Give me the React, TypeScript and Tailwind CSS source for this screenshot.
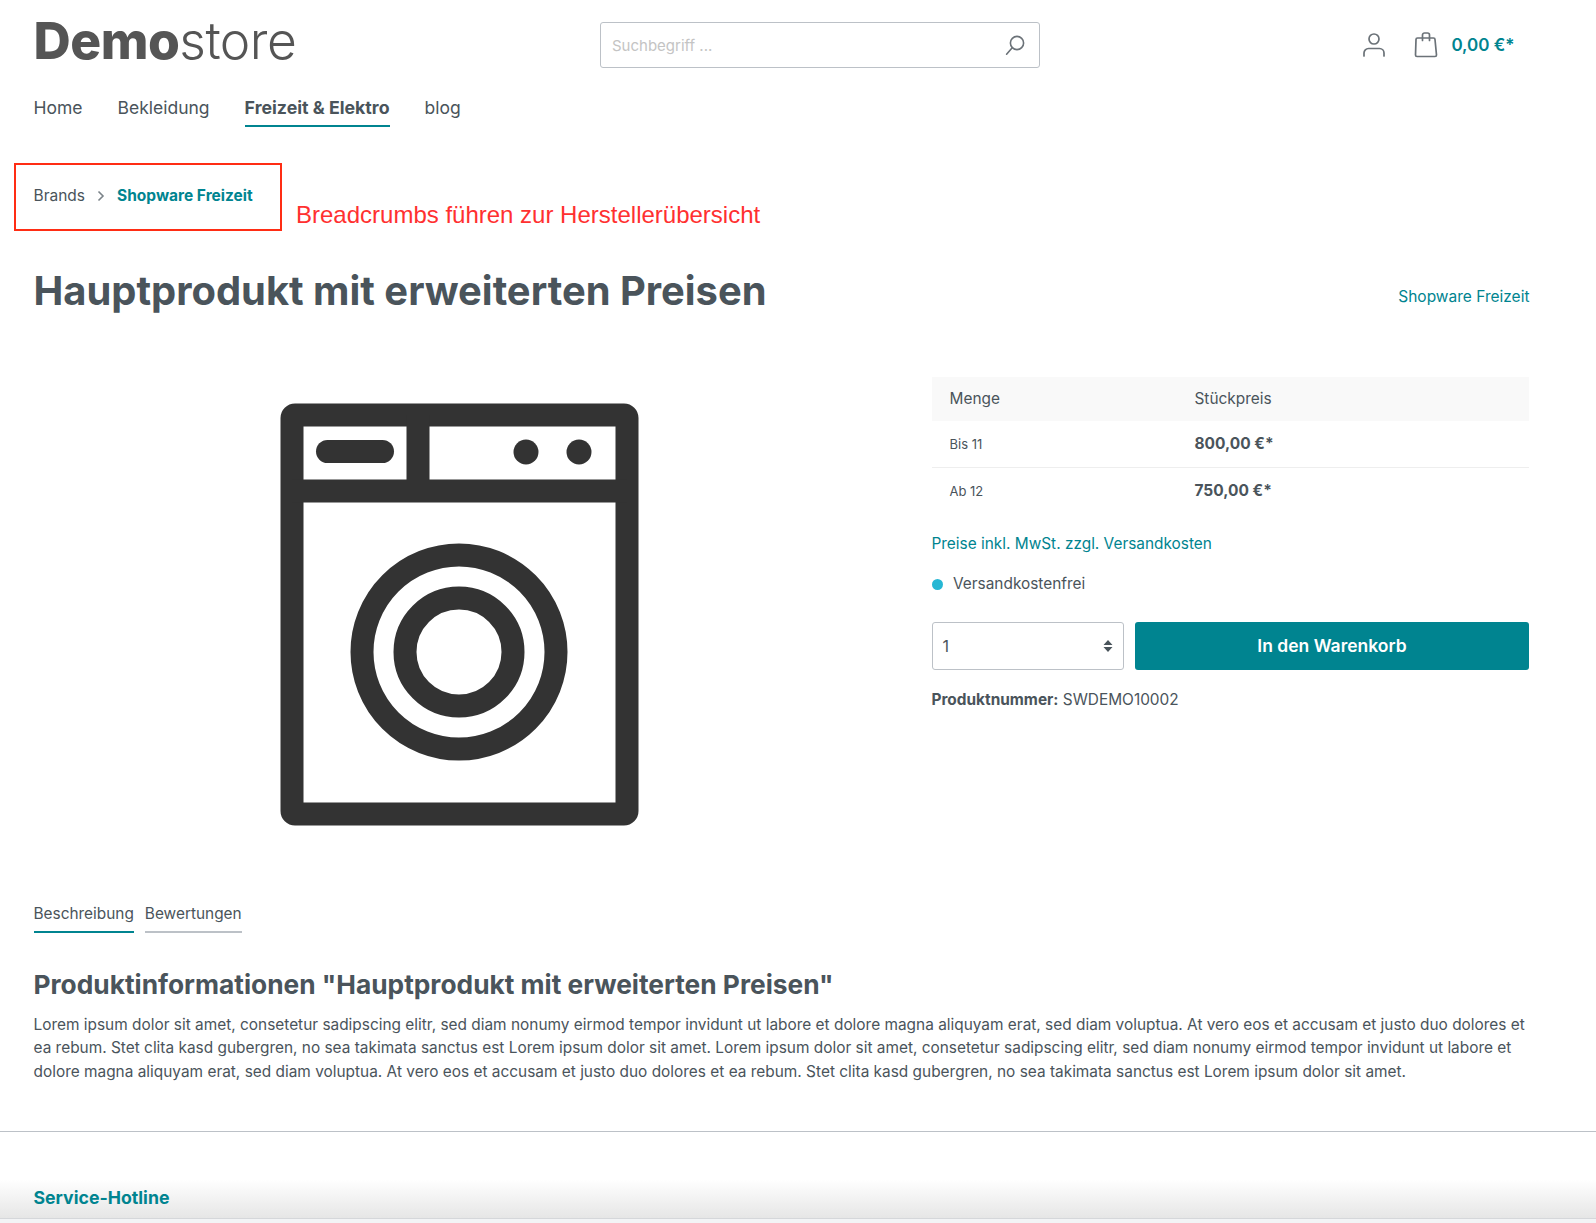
const navItems = ['Home', 'Bekleidung', 'Freizeit & Elektro', 'blog'];

function SearchIcon() {
  return (
    <svg width="24" height="24" viewBox="0 0 24 24" fill="none" stroke="#6b7278" strokeWidth="1.6">
      <circle cx="14" cy="10" r="6.6" />
      <path d="M9.2 14.8 3.6 21.2" strokeLinecap="round" />
    </svg>
  );
}

function UserIcon() {
  return (
    <svg width="24" height="26" viewBox="0 0 24 26" fill="none" stroke="#6b7278" strokeWidth="1.7">
      <circle cx="12" cy="7" r="5" />
      <path d="M2 24v-3a4.500 4.500 0 0 1 4.500-4.500h11A4.500 4.500 0 0 1 22 21v3" strokeLinecap="round" />
    </svg>
  );
}

function BagIcon() {
  return (
    <svg width="24" height="26" viewBox="0 0 24 26" fill="none" stroke="#6b7278" strokeWidth="1.7">
      <path d="M3.500 6H8.500M15.500 6h4A1.500 1.500 0 0 1 21 7.500L22.500 23a1.500 1.500 0 0 1-1.500 1.500H3A1.500 1.500 0 0 1 1.500 23L2 7.500A1.500 1.500 0 0 1 3.500 6Z" strokeLinejoin="round" />
      <path d="M8.500 8.500V3a2 2 0 0 1 2-2h3a2 2 0 0 1 2 2v5.500" strokeLinecap="round" />
    </svg>
  );
}

function WasherIcon() {
  return (
    <svg width="359" height="423" viewBox="0 0 359 423" className="block">
      <rect x="12" y="12" width="335" height="399" rx="3" fill="#fff" stroke="#333333" strokeWidth="23" strokeLinejoin="round" />
      <path d="M12 88H347M138 12V88" stroke="#333333" strokeWidth="23" fill="none" />
      <rect x="36" y="37" width="78" height="23" rx="11.500" fill="#333333" />
      <circle cx="246" cy="49" r="12.500" fill="#333333" />
      <circle cx="299" cy="49" r="12.500" fill="#333333" />
      <circle cx="179" cy="249" r="97" fill="none" stroke="#333333" strokeWidth="23" />
      <circle cx="179" cy="249" r="54" fill="none" stroke="#333333" strokeWidth="23" />
    </svg>
  );
}

export default function App() {
  return (
    <div className="relative overflow-hidden bg-white font-['Inter',sans-serif] text-[#4a545b]">
      {/* red annotation from the screenshot */}
      <div className="absolute left-[14px] top-[163px] h-[68px] w-[268px] border-2 border-[#ff2d14]" />
      <div className="absolute left-[296px] top-[200px] font-['Liberation_Sans',sans-serif] text-[24px] leading-[30px] text-[#ff3030]">
        Breadcrumbs führen zur Herstellerübersicht
      </div>

      <div className="pl-[33.500px] pr-[66.500px]">
        <header className="flex h-[91px] items-start">
          <div className="mt-[10px] w-[566.500px] text-[51.500px] leading-[60px] tracking-[-0.5px] text-[#555555]">
            <span className="font-extrabold">Demo</span>
            <span className="font-light">store</span>
          </div>
          <div className="mt-[22px] flex h-[46px] w-[440px] items-center justify-between rounded-[3px] border border-[#bcc1c7] pl-[11px] pr-[12px]">
            <span className="pt-[2px] text-[15px] text-[#c4c4c4]">Suchbegriff ...</span>
            <SearchIcon />
          </div>
          <div className="ml-auto mr-[15px] mt-[32px] flex items-center">
            <UserIcon />
            <span className="ml-[28px]"><BagIcon /></span>
            <span className="ml-[13px] pt-[1px] text-[17px] font-semibold text-[#008490]">0,00 €*</span>
          </div>
        </header>

        <nav className="flex h-[37px] gap-[35px]">
          {navItems.map((item) => (
            <div
              key={item}
              className={
                item === 'Freizeit & Elektro'
                  ? 'h-[36px] border-b-2 border-[#008490] pt-[4px] text-[17.750px] font-bold'
                  : 'h-[36px] pt-[4px] text-[17.500px]'
              }
            >
              {item}
            </div>
          ))}
        </nav>

        <div className="mt-[56px] flex h-[24px] items-center text-[15.500px]">
          <span>Brands</span>
          <svg width="10" height="12" viewBox="0 0 10 12" fill="none" stroke="#7b8389" strokeWidth="1.600" className="mx-[11px]">
            <path d="M2.500 1.500 7 6l-4.500 4.500" />
          </svg>
          <span className="font-bold text-[#008490]">Shopware Freizeit</span>
        </div>

        <div className="mt-[55px] flex h-[56px] items-center justify-between">
          <h1 className="text-[39.900px] font-bold leading-[56px]">Hauptprodukt mit erweiterten Preisen</h1>
          <a className="mt-[11px] text-[15.500px] text-[#008490]">Shopware Freizeit</a>
        </div>

        <div className="mt-[58px] flex h-[522px]">
          <div className="w-[898px] shrink-0 pl-[246px] pt-[26px]">
            <WasherIcon />
          </div>
          <div className="w-[597.500px]">
            <div className="flex h-[44px] items-center bg-[#f9f9f9] text-[15.400px]">
              <div className="w-[263px] pl-[18px]">Menge</div>
              <div>Stückpreis</div>
            </div>
            <div className="flex h-[47px] items-center border-b border-[#eeeeee]">
              <div className="w-[263px] pl-[18px] pt-[1px] text-[13px]">Bis 11</div>
              <div className="text-[15.500px] font-bold">800,00 €*</div>
            </div>
            <div className="flex h-[46px] items-center">
              <div className="w-[263px] pl-[18px] pt-[1px] text-[13px]">Ab 12</div>
              <div className="text-[15.500px] font-bold">750,00 €*</div>
            </div>
            <div className="mt-[18px] text-[15.400px] leading-[24px] text-[#008490]">
              Preise inkl. MwSt. zzgl. Versandkosten
            </div>
            <div className="mt-[16px] flex h-[24px] items-center text-[15.400px]">
              <span className="mr-[10.500px] h-[11px] w-[11px] rounded-full bg-[#26b7d4]" />
              Versandkostenfrei
            </div>
            <div className="mt-[26px] flex h-[48px] gap-[11px]">
              <div className="flex w-[192.500px] items-center justify-between rounded-[3px] border border-[#bcc1c7] pl-[10px] pr-[10px] text-[16px]">
                1
                <svg width="10" height="12" viewBox="0 0 10 12" fill="#4a545b">
                  <path d="M5 0 9.500 5H.5ZM5 12 .5 7h9Z" />
                </svg>
              </div>
              <button className="flex-1 rounded-[3px] bg-[#008490] text-[17.500px] font-semibold text-white">
                In den Warenkorb
              </button>
            </div>
            <div className="mt-[18px] text-[15.400px] leading-[24px]">
              <span className="font-bold">Produktnummer:</span> SWDEMO10002
            </div>
          </div>
        </div>

        <div className="flex h-[34px] gap-[11px] text-[15.400px]">
          <div className="h-[34px] border-b-2 border-[#008490] pt-[3px]">Beschreibung</div>
          <div className="h-[34px] border-b-2 border-[#bcc1c7] pt-[3px]">Bewertungen</div>
        </div>

        <h2 className="mt-[33px] text-[26.300px] font-bold leading-[38px]">Produktinformationen "Hauptprodukt mit erweiterten Preisen"</h2>

        <p className="mt-[9px] text-[15.420px] leading-[23.400px]">
          Lorem ipsum dolor sit amet, consetetur sadipscing elitr, sed diam nonumy eirmod tempor invidunt ut labore et dolore magna aliquyam erat, sed diam voluptua. At vero eos et accusam et justo duo dolores et ea rebum. Stet clita kasd gubergren, no sea takimata sanctus est Lorem ipsum dolor sit amet. Lorem ipsum dolor sit amet, consetetur sadipscing elitr, sed diam nonumy eirmod tempor invidunt ut labore et dolore magna aliquyam erat, sed diam voluptua. At vero eos et accusam et justo duo dolores et ea rebum. Stet clita kasd gubergren, no sea takimata sanctus est Lorem ipsum dolor sit amet.
        </p>
      </div>

      <footer className="mt-[48px] h-[92px] border-t border-[#bcc1c7]">
        <div className="h-[86px] bg-gradient-to-b from-white from-[55%] to-[#e6e6e6] pl-[33.500px] pt-[54px] text-[17.700px] font-bold leading-[24px] text-[#008490]">
          Service-Hotline
        </div>
        <div className="h-[5px] border-t border-[#d5d7da] bg-[#f3f4f6]" />
      </footer>
    </div>
  );
}
